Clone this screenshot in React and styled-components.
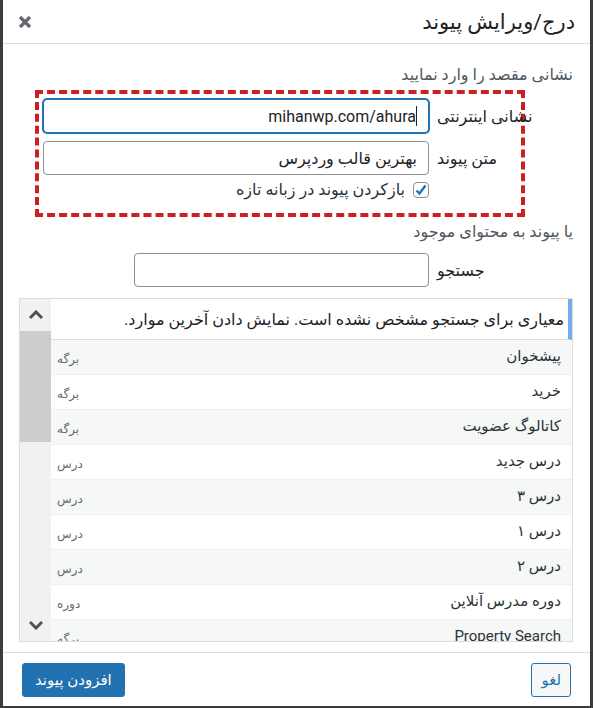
import React from "react";
import styled, { createGlobalStyle } from "styled-components";

const Global = createGlobalStyle`
  html, body { margin: 0; padding: 0; background: #3c3c3c; }
  body { font-family: Roboto, "DejaVu Sans", sans-serif; }
  * { box-sizing: border-box; }
`;

const Dialog = styled.div`
  direction: rtl;
  width: 587px;
  height: 706px;
  margin: 0 3px;
  background: #fff;
  display: flex;
  flex-direction: column;
  color: #1d2327;
`;

const Header = styled.div`
  display: flex;
  align-items: center;
  height: 44px;
  border-bottom: 1px solid #dcdcde;
  padding: 0 15px 0 14px;
`;

const Title = styled.h1`
  margin: 0;
  font-size: 21px;
  font-weight: 400;
  line-height: 44px;
  color: #1d2327;
`;

const CloseBtn = styled.button`
  margin-right: auto;
  border: 0;
  background: none;
  padding: 0;
  width: 16px;
  height: 16px;
  display: flex;
  align-items: center;
  justify-content: center;
  color: #646970;
`;

const Body = styled.div`
  padding: 0 17px 0 16px;
  flex: 1;
  display: flex;
  flex-direction: column;
`;

const Intro = styled.p`
  margin: ${(p) => p.$top || 0}px 0 0;
  font-size: 16px;
  line-height: 24px;
  color: #50575e;
`;

const Highlight = styled.div`
  margin: 3px 48px 0 16px;
  border: 4px dashed #cc1f1f;
  padding: 5px 0 15px 4px;
  display: flex;
  flex-direction: column;
`;

const FieldRow = styled.div`
  display: flex;
  align-items: center;
  gap: 8px;
  margin: ${(p) => p.$margin || "0"};
`;

const FieldLabel = styled.span`
  flex: none;
  width: 84px;
  direction: ltr;
  text-align: left;
  white-space: nowrap;
  font-size: 16px;
  color: #1d2327;
`;

const TextInput = styled.div`
  width: ${(p) => p.$width || 386}px;
  height: 34px;
  border: 1px solid ${(p) => (p.$focus ? "#2271b1" : "#8c8f94")};
  box-shadow: ${(p) => (p.$focus ? "0 0 0 1px #2271b1" : "none")};
  border-radius: 4px;
  background: #fff;
  padding: 0 11px;
  display: flex;
  align-items: center;
  font-size: 16px;
  color: #1d2327;
  direction: ${(p) => (p.$ltr ? "ltr" : "rtl")};
  justify-content: ${(p) => (p.$ltr ? "flex-end" : "flex-start")};
`;

const Caret = styled.span`
  display: inline-block;
  width: 1px;
  height: 20px;
  background: #1d2327;
`;

const CheckRow = styled.label`
  display: flex;
  align-items: center;
  gap: 8px;
  height: 17px;
  margin: 6px 92px 0 0;
  font-size: 16px;
  color: #2c3338;
`;

const Box = styled.span`
  width: 16px;
  height: 16px;
  border: 1px solid #8c8f94;
  border-radius: 4px;
  background: #fff;
  display: flex;
  align-items: center;
  justify-content: center;
`;

const Results = styled.div`
  margin-top: 11px;
  height: 344px;
  border: 1px solid #dcdcde;
  display: flex;
  overflow: hidden;
`;

const List = styled.ul`
  list-style: none;
  margin: 0;
  padding: 0;
  flex: 1;
  overflow: hidden;
`;

const Notice = styled.li`
  height: 41px;
  border-right: 4px solid #72aee6;
  border-bottom: 1px solid #dcdcde;
  background: #fff;
  display: flex;
  align-items: center;
  padding: 0 4px 0 8px;
  font-size: 16px;
  color: #1d2327;
`;

const Row = styled.li`
  height: 35px;
  flex: none;
  display: flex;
  align-items: center;
  justify-content: space-between;
  padding: 0 11px 0 6px;
  border-bottom: 1px solid #f0f0f1;
  background: ${(p) => (p.$alt ? "#f6f7f7" : "#fff")};
`;

const ItemTitle = styled.span`
  font-size: 15px;
  color: #2c3338;
  padding-bottom: 3px;
`;

const ItemInfo = styled.span`
  font-size: 12px;
  color: #646970;
  padding-top: 3px;
`;

const Scrollbar = styled.div`
  width: 31px;
  flex: none;
  background: #f1f1f1;
  display: flex;
  flex-direction: column;
`;

const ScrollBtn = styled.div`
  height: 32px;
  display: flex;
  align-items: center;
  justify-content: center;
  margin-top: ${(p) => (p.$end ? "auto" : "0")};
`;

const Thumb = styled.div`
  height: 111px;
  background: #cdcdcd;
`;

const Footer = styled.div`
  border-top: 1px solid #dcdcde;
  margin-top: 10px;
  height: 54px;
  display: flex;
  align-items: center;
  justify-content: space-between;
  padding: 0 19px 0 19px;
`;

const Button = styled.button`
  height: 34px;
  border-radius: 3px;
  font-family: Roboto, "DejaVu Sans", sans-serif;
  font-size: 15px;
  padding: 0 ${(p) => (p.$primary ? 12 : 9)}px;
  border: 1px solid #2271b1;
  background: ${(p) => (p.$primary ? "#2271b1" : "#f6f7f7")};
  color: ${(p) => (p.$primary ? "#fff" : "#2271b1")};
`;

const items = [
  ["پیشخوان", "برگه"],
  ["خرید", "برگه"],
  ["کاتالوگ عضویت", "برگه"],
  ["درس جدید", "درس"],
  ["درس ۳", "درس"],
  ["درس ۱", "درس"],
  ["درس ۲", "درس"],
  ["دوره مدرس آنلاین", "دوره"],
  ["Property Search", "برگه"],
];

const Chevron = ({ up }) => (
  <svg width="14" height="10" viewBox="0 0 14 10">
    <path
      d={up ? "M1 8 L7 2 L13 8" : "M1 2 L7 8 L13 2"}
      fill="none"
      stroke="#505050"
      strokeWidth="3"
    />
  </svg>
);

export default function App() {
  return (
    <>
      <Global />
      <Dialog>
        <Header>
          <Title>درج/ویرایش پیوند</Title>
          <CloseBtn aria-label="close">
            <svg width="14" height="14" viewBox="0 0 14 14">
              <path d="M2 2 L12 12 M12 2 L2 12" stroke="#646970" strokeWidth="3.2" />
            </svg>
          </CloseBtn>
        </Header>
        <Body>
          <Intro $top={19}>نشانی مقصد را وارد نمایید</Intro>
          <Highlight>
            <FieldRow>
              <FieldLabel>نشانی اینترنتی</FieldLabel>
              <TextInput $focus $ltr>
                mihanwp.com/ahura
                <Caret />
              </TextInput>
            </FieldRow>
            <FieldRow $margin="8px 0 0 0">
              <FieldLabel>متن پیوند</FieldLabel>
              <TextInput>بهترین قالب وردپرس</TextInput>
            </FieldRow>
            <CheckRow>
              <Box>
                <svg width="14" height="14" viewBox="0 0 14 14">
                  <path d="M2.5 7.5 L5.5 10.5 L11.5 2.5" fill="none" stroke="#2271b1" strokeWidth="2.4" />
                </svg>
              </Box>
              بازکردن پیوند در زبانه تازه
            </CheckRow>
          </Highlight>
          <Intro $top={3}>یا پیوند به محتوای موجود</Intro>
          <FieldRow $margin="9px 52px 0 0">
            <FieldLabel>جستجو</FieldLabel>
            <TextInput $width={295} />
          </FieldRow>
          <Results>
            <List>
              <Notice>معیاری برای جستجو مشخص نشده است. نمایش دادن آخرین موارد.</Notice>
              {items.map(([t, i], idx) => (
                <Row key={t} $alt={idx % 2 === 0}>
                  <ItemTitle>{t}</ItemTitle>
                  <ItemInfo>{i}</ItemInfo>
                </Row>
              ))}
            </List>
            <Scrollbar>
              <ScrollBtn>
                <Chevron up />
              </ScrollBtn>
              <Thumb />
              <ScrollBtn $end>
                <Chevron />
              </ScrollBtn>
            </Scrollbar>
          </Results>
        </Body>
        <Footer>
          <Button>لغو</Button>
          <Button $primary>افزودن پیوند</Button>
        </Footer>
      </Dialog>
    </>
  );
}
